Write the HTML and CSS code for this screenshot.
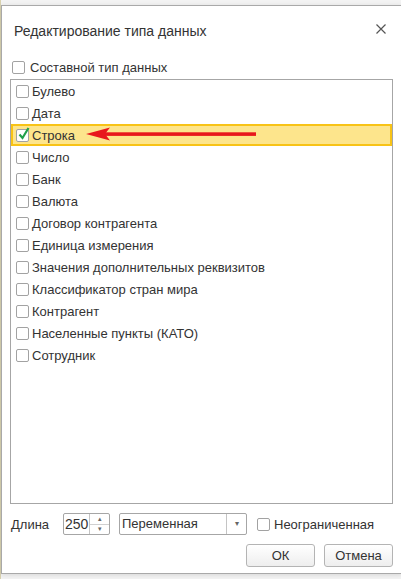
FILE: index.html
```html
<!DOCTYPE html>
<html lang="ru">
<head>
    <meta charset="UTF-8">
    <title>Редактирование типа данных</title>
    <link rel="stylesheet" href="styles.css">
</head>
<body>
    <div class="dialog">
        <div class="dialog-header">
            <span class="dialog-title">Редактирование типа данных</span>
            <svg class="close" width="10" height="10" viewBox="0 0 10 10">
                <path d="M0.5 0.5 L9.5 9.5 M9.5 0.5 L0.5 9.5" stroke="#555" stroke-width="1.2" fill="none"/>
            </svg>
        </div>

        <div class="check-row composite"><span class="box"></span>Составной тип данных</div>

        <div class="type-list">
            <div class="type-row"><span class="box"></span>Булево</div>
            <div class="type-row"><span class="box"></span>Дата</div>
            <div class="type-row selected">
                <span class="box">
                    <svg class="tick" width="13" height="15" viewBox="0 0 13 15">
                        <path d="M2.5 8.5 L5.5 12 L11.5 2" stroke="#22a04b" stroke-width="2.2" fill="none"/>
                    </svg>
                </span>Строка
                <svg class="pointer" width="172" height="14" viewBox="0 0 172 14">
                    <polygon points="0,7 24,0.5 19,7 24,13.5" fill="#e8171c"/>
                    <rect x="18" y="5.3" width="152" height="3.6" fill="#e8171c"/>
                </svg>
            </div>
            <div class="type-row"><span class="box"></span>Число</div>
            <div class="type-row"><span class="box"></span>Банк</div>
            <div class="type-row"><span class="box"></span>Валюта</div>
            <div class="type-row"><span class="box"></span>Договор контрагента</div>
            <div class="type-row"><span class="box"></span>Единица измерения</div>
            <div class="type-row"><span class="box"></span>Значения дополнительных реквизитов</div>
            <div class="type-row"><span class="box"></span>Классификатор стран мира</div>
            <div class="type-row"><span class="box"></span>Контрагент</div>
            <div class="type-row"><span class="box"></span>Населенные пункты (КАТО)</div>
            <div class="type-row"><span class="box"></span>Сотрудник</div>
        </div>

        <div class="length-row">
            <span class="length-label">Длина</span>
            <div class="spin">
                <span class="spin-value">250</span>
                <div class="spin-buttons">
                    <span class="spin-up">▴</span>
                    <span class="spin-down">▾</span>
                </div>
            </div>
            <div class="select">
                <span class="select-value">Переменная</span>
                <span class="select-arrow">▾</span>
            </div>
            <div class="check-row unlimited"><span class="box"></span>Неограниченная</div>
        </div>

        <div class="dialog-buttons">
            <button class="btn">ОК</button>
            <button class="btn">Отмена</button>
        </div>
    </div>
</body>
</html>
```

FILE: styles.css
```css
* {
    margin: 0;
    padding: 0;
    box-sizing: border-box;
}

body {
    font-family: 'Liberation Sans', Arial, sans-serif;
    font-size: 13px;
    color: #333;
    background: linear-gradient(90deg, #d9d2b0 0, #d9d2b0 1px, #f3f3f3 1px);
    height: 579px;
    overflow: hidden;
    padding: 5px 0 0 1px;
}

.dialog {
    width: 401px;
    height: 569px;
    background: #fff;
    border: 1px solid #a9a9a9;
    box-shadow: 0 1px 5px rgba(0, 0, 0, 0.12);
    display: flex;
    flex-direction: column;
}

.dialog-header {
    height: 50px;
    display: flex;
    align-items: center;
    justify-content: space-between;
    padding: 0 15px 0 12px;
}

.dialog-title {
    font-size: 14px;
    color: #333;
}

.close {
    margin-top: -4px;
}

.box {
    width: 13px;
    height: 13px;
    border: 1px solid #a2a2a2;
    border-radius: 2px;
    background: #fff;
    flex: none;
    position: relative;
}

.check-row {
    display: flex;
    align-items: center;
    gap: 5px;
}

.composite {
    height: 22px;
    padding-left: 10px;
}

.type-list {
    flex: 1;
    margin: 1px 8px 0;
    border: 1px solid #a6a6a6;
}

.type-row {
    height: 22px;
    display: flex;
    align-items: center;
    gap: 3px;
    padding-left: 3px;
    border: 2px solid transparent;
    position: relative;
}

.type-row.selected {
    background: #fde58c;
    border-color: #f8c316;
}

.tick {
    position: absolute;
    left: 0;
    top: -4px;
}

/* red pointer drawn over the highlighted row */
.pointer {
    position: absolute;
    left: 73px;
    top: 1px;
}

.length-row {
    display: flex;
    align-items: center;
    height: 22px;
    margin-top: 9px;
    padding-left: 9px;
}

.length-label {
    width: 52px;
}

.spin {
    width: 47px;
    height: 22px;
    border: 1px solid #a6a6a6;
    border-radius: 2px;
    display: flex;
}

.spin-value {
    width: 25px;
    line-height: 20px;
    padding-left: 1px;
    font-size: 14px;
}

.spin-buttons {
    flex: 1;
    border-left: 1px solid #c4c4c4;
    display: flex;
    flex-direction: column;
    align-items: center;
    font-size: 7px;
    color: #666;
    line-height: 10px;
    background: linear-gradient(#d0d0d0, #d0d0d0) center / 100% 1px no-repeat;
}

.spin-buttons span {
    height: 10px;
}

.select {
    width: 128px;
    height: 22px;
    margin-left: 9px;
    border: 1px solid #a6a6a6;
    border-radius: 2px;
    display: flex;
}

.select-value {
    flex: 1;
    line-height: 20px;
    padding-left: 2px;
    font-size: 13px;
}

.select-arrow {
    width: 20px;
    border-left: 1px solid #c4c4c4;
    text-align: center;
    font-size: 8px;
    line-height: 20px;
    color: #666;
}

.unlimited {
    margin-left: 10px;
    gap: 4px;
}

.dialog-buttons {
    display: flex;
    justify-content: flex-end;
    gap: 9px;
    margin-top: 9px;
    padding: 0 8px 6px;
}

.btn {
    height: 23px;
    width: 69px;
    font-family: inherit;
    font-size: 13px;
    color: #333;
    border: 1px solid #b4b4b4;
    border-radius: 3px;
    background: linear-gradient(#ffffff, #eeeeee);
}
```
